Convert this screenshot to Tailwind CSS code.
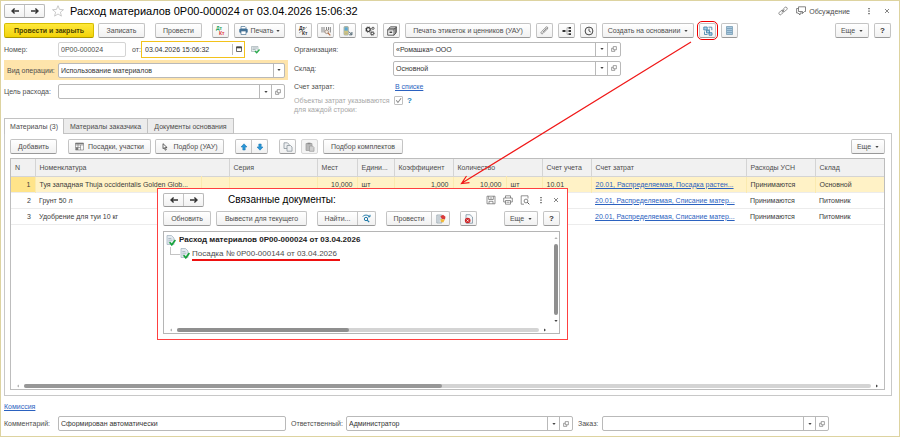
<!DOCTYPE html>
<html lang="ru">
<head>
<meta charset="utf-8">
<meta name="viewport" content="width=device-width, initial-scale=1">
<title>Расход материалов</title>
<script src="https://cdn.jsdelivr.net/npm/@tailwindcss/browser@4"></script>
</head>
<body class="bg-white font-['Liberation_Sans',Arial,sans-serif] text-[7px] leading-[9px] text-[#4d4d4d]">
<svg class="hidden" aria-hidden="true">
  <symbol id="left" viewBox="0 0 10 8"><path d="M9 4H2M4.600 1.400 2 4l2.600 2.600" fill="none" stroke="#333" stroke-width="1.400"/></symbol>
  <symbol id="right" viewBox="0 0 10 8"><path d="M1 4h7M5.400 1.400 8 4 5.400 6.600" fill="none" stroke="#333" stroke-width="1.400"/></symbol>
  <symbol id="caret" viewBox="0 0 4 4"><path d="M.4 1h3.200L2 3z" fill="#444"/></symbol>
  <symbol id="open" viewBox="0 0 8 8"><path d="M3 .8h4.200v4.200H3zM3 3H.8v4.200H5V5" fill="none" stroke="#666" stroke-width=".8"/></symbol>
  <symbol id="close" viewBox="0 0 6 6"><path d="m1 1 4 4M5 1 1 5" stroke="#666" stroke-width=".8"/></symbol>
  <symbol id="dots" viewBox="0 0 2 8"><path d="M.3 1h1.400v1.300H.3zM.3 3.500h1.400v1.300H.3zM.3 6h1.400v1.300H.3z" fill="#555"/></symbol>
  <symbol id="doc" viewBox="0 0 10 11"><path d="M1 .5h4.500l2.500 2.500v6.500H1z" fill="#e3eaef" stroke="#9fb0bd" stroke-width=".7"/><path d="M2.300 3.500h3M2.300 5.200h4M2.300 7h2" stroke="#8a9dac" stroke-width=".6"/><path d="m3.600 7.300 2.200 2.500L9.400 5" fill="none" stroke="#14a33a" stroke-width="1.700"/></symbol>
</svg>

<main class="relative flex min-h-screen flex-col border border-[#ddd3a0] px-1 pt-[3px] pb-[5px] pl-[3px]">
  <header class="flex h-[14px] items-center">
    <div class="flex h-[14px] w-[41px] divide-x divide-[#c4c4c4] rounded-[2px] border border-[#b9b9b9] border-b-[#999] bg-linear-to-b from-white to-[#f1f1f1]">
      <button class="flex flex-1 items-center justify-center" aria-label="Назад"><svg class="h-2 w-[10px]"><use href="#left"/></svg></button>
      <button class="flex flex-1 items-center justify-center" aria-label="Вперед"><svg class="h-2 w-[10px]"><use href="#right"/></svg></button>
    </div>
    <button class="ml-[7px]" aria-label="В избранное"><svg class="size-3" viewBox="0 0 12 12"><path d="m6 .7 1.500 3.700 4 .3-3.100 2.500 1 3.900L6 9 2.600 11.100l1-3.900L.5 4.700l4-.3z" fill="#fff" stroke="#b5b5b5" stroke-width=".7"/></svg></button>
    <h1 class="ml-[6px] text-[11px] leading-[14px] text-black">Расход материалов 0Р00-000024 от 03.04.2026 15:06:32</h1>
    <div class="ml-auto flex items-center pr-[5px]">
      <button aria-label="Ссылка"><svg class="size-[10px]" viewBox="0 0 10 10"><g fill="none" stroke="#777" stroke-width=".8"><rect x="4.500" y="1.900" width="5" height="2.800" rx="1.400" transform="rotate(-45 7 3.300)"/><rect x=".6" y="5.200" width="5" height="2.800" rx="1.400" transform="rotate(-45 3.100 6.600)"/><path d="m3.600 6.300 2.800-2.800"/></g></svg></button>
      <button class="ml-2 flex items-center gap-[3px]"><svg class="size-[10px]" viewBox="0 0 10 10"><path d="M2.500.8h7v4.700H8.500L6.500 7.500v-2h-4zM2.500 2.500H.6v4.500h1.400l2 2V7h2.500" fill="none" stroke="#666" stroke-width=".8"/></svg><span>Обсуждение</span></button>
      <button class="ml-[18px]" aria-label="Меню"><svg class="h-2 w-[2px]"><use href="#dots"/></svg></button>
      <button class="ml-[14px]" aria-label="Закрыть"><svg class="size-[6px]"><use href="#close"/></svg></button>
    </div>
  </header>

  <div class="mt-[5px] flex h-[15px] items-stretch gap-[10px]">
    <div class="flex gap-1">
      <button class="w-[90px] rounded-[2px] border border-[#d5bd00] border-b-[#a99500] bg-linear-to-b from-[#ffe838] to-[#f2d300] font-bold text-[#4a4200]">Провести и закрыть</button>
      <button class="w-[47px] rounded-[2px] border border-[#c4c4c4] border-b-[#999] bg-linear-to-b from-white to-[#f1f1f1]">Записать</button>
    </div>
    <button class="w-[47px] rounded-[2px] border border-[#c4c4c4] border-b-[#999] bg-linear-to-b from-white to-[#f1f1f1]">Провести</button>
    <div class="flex gap-[5px]">
      <button class="flex w-[17px] items-center justify-center rounded-[2px] border border-[#c4c4c4] border-b-[#999] bg-linear-to-b from-white to-[#f1f1f1]" aria-label="Движения документа"><svg class="h-[11px] w-3 font-bold" viewBox="0 0 12 11"><text x="1" y="5" font-size="5" fill="#1ea45b">Дт</text><text x="4" y="10" font-size="5" fill="#e23b3b">Кт</text></svg></button>
      <button class="flex w-[51px] items-center justify-center gap-[3px] rounded-[2px] border border-[#c4c4c4] border-b-[#999] bg-linear-to-b from-white to-[#f1f1f1]"><svg class="size-[9px]" viewBox="0 0 9 9"><path d="M2 .5h4l1 1V3H2z" fill="#fff" stroke="#4a7394" stroke-width=".7"/><rect x=".3" y="2.800" width="8.400" height="4" rx="1" fill="#3f6f96"/><path d="M2 5h5v3.500H2z" fill="#fff" stroke="#4a7394" stroke-width=".7"/></svg><span>Печать</span><svg class="size-[4px]"><use href="#caret"/></svg></button>
    </div>
    <div class="flex gap-[5px]">
      <button class="flex w-[17px] items-center justify-center rounded-[2px] border border-[#c4c4c4] border-b-[#999] bg-linear-to-b from-white to-[#f1f1f1]" aria-label="Проводки"><svg class="h-[11px] w-3 font-bold" viewBox="0 0 12 11"><text x="1" y="5" font-size="5" fill="#333">Дт</text><text x="4" y="10" font-size="5" fill="#333">Кт</text><path d="m1 8 8-6" stroke="#555" stroke-width=".5"/></svg></button>
      <button class="flex w-[17px] items-center justify-center rounded-[2px] border border-[#c4c4c4] border-b-[#999] bg-linear-to-b from-white to-[#f1f1f1]" aria-label="Штрихкод"><svg class="size-[10px]" viewBox="0 0 10 10"><path d="M1 1v5.500M3 1v5.500M5.500 1v3M7.500 1v3M9.300 1v5.500" stroke="#777" stroke-width=".9"/><circle cx="5.700" cy="5.800" r="1.800" fill="#f3e6dc" stroke="#8a7768" stroke-width=".7"/><path d="m7 7 2.300 2.300" stroke="#b96d43" stroke-width="1.100"/></svg></button>
      <button class="flex w-[17px] items-center justify-center rounded-[2px] border border-[#c4c4c4] border-b-[#999] bg-linear-to-b from-white to-[#f1f1f1]" aria-label="Терминал"><svg class="size-[10px]" viewBox="0 0 10 10"><rect x="1" y=".5" width="4.300" height="8.500" rx=".8" fill="#e7d77c" stroke="#8a9aa2" stroke-width=".7"/><path d="M1.500 1.200h3.300v3.500H1.500z" fill="#5aa6d6"/><path d="M2 6h2.500M2 7.400h2.500" stroke="#999" stroke-width=".6"/><path d="M6 5.700 8.500 8.300M8.900 6v2.800H6.200" fill="none" stroke="#3a5261" stroke-width=".9"/></svg></button>
      <button class="flex w-[17px] items-center justify-center rounded-[2px] border border-[#c4c4c4] border-b-[#999] bg-linear-to-b from-white to-[#f1f1f1]" aria-label="Настройки"><svg class="size-[10px]" viewBox="0 0 10 10"><g fill="none" stroke="#333"><circle cx="3.300" cy="3.600" r="1.900" stroke-width="1.200"/><circle cx="3.300" cy="3.600" r="2.900" stroke-dasharray="1 1.300" stroke-width=".7"/><circle cx="7.300" cy="7.400" r="1.300"/><circle cx="7.300" cy="7.400" r="2.100" stroke-dasharray=".8 .8" stroke-width=".6"/><circle cx="8" cy="2.300" r="1.100" stroke-width=".8"/></g></svg></button>
      <button class="flex w-[17px] items-center justify-center rounded-[2px] border border-[#c4c4c4] border-b-[#999] bg-linear-to-b from-white to-[#f1f1f1]" aria-label="Архив"><svg class="size-[10px]" viewBox="0 0 10 10"><path d="M.7 3.800h6.300v5.400H.7zM2 2.300h6.300v5.400M3.400.8h6v5.500M.7 3.800 3.400.8M7 3.800 9.400.8M7 9.200l2.400-2.900" fill="none" stroke="#3c3c3c" stroke-width=".8"/><path d="M2.500 5.500h2.700v1.500H2.500z" fill="#444"/></svg></button>
      <button class="w-[126px] rounded-[2px] border border-[#c4c4c4] border-b-[#999] bg-linear-to-b from-white to-[#f1f1f1]">Печать этикеток и ценников (УАУ)</button>
      <button class="flex w-[17px] items-center justify-center rounded-[2px] border border-[#c4c4c4] border-b-[#999] bg-linear-to-b from-white to-[#f1f1f1]" aria-label="Файлы"><svg class="size-[9px]" viewBox="0 0 9 9"><path d="M2.700 6.300 6 3c.8-.8 0-1.600-.8-.9L1.500 5.700C.2 7 1.700 8.600 3 7.400l4.300-4.300C8.700 1.600 7 0 5.600 1.300" fill="none" stroke="#777" stroke-width=".8"/></svg></button>
      <button class="flex w-[17px] items-center justify-center rounded-[2px] border border-[#c4c4c4] border-b-[#999] bg-linear-to-b from-white to-[#f1f1f1]" aria-label="Структура"><svg class="size-[10px]" viewBox="0 0 10 10"><path d="M.5 4h3v2h-3zM6.500.9h2.500v1.800H6.500zM6.500 4.100h2.500v1.800H6.500zM6.500 7.300h2.500v1.800H6.500z" fill="#333"/><path d="M3.500 5h3M5 1.700v6.600h1.500M5 1.700h1.500" fill="none" stroke="#888" stroke-width=".6"/></svg></button>
      <button class="flex w-[17px] items-center justify-center rounded-[2px] border border-[#c4c4c4] border-b-[#999] bg-linear-to-b from-white to-[#f1f1f1]" aria-label="История"><svg class="size-[10px]" viewBox="0 0 10 10"><circle cx="5" cy="5" r="3.900" fill="none" stroke="#444"/><path d="M5 2.500V5l1.800 1" fill="none" stroke="#444" stroke-width=".9"/></svg></button>
      <button class="flex w-[92px] items-center justify-center gap-1 rounded-[2px] border border-[#c4c4c4] border-b-[#999] bg-linear-to-b from-white to-[#f1f1f1]"><span>Создать на основании</span><svg class="size-[4px]"><use href="#caret"/></svg></button>
      <button class="relative flex w-[17px] items-center justify-center rounded-[2px] border border-[#c4c4c4] border-b-[#999] bg-linear-to-b from-white to-[#f1f1f1]" aria-label="Связанные документы"><svg class="size-[10px]" viewBox="0 0 10 10"><path d="M.8 1h3.400v3H.8zM3.500 4.300h3v2.600h-3zM6 6.700h3v2.500H6z" fill="#a9d0e8" stroke="#3a7ca5" stroke-width=".8"/><path d="M5.500 1.200h3.300v3M7 2.800l-1.500 1M1.500 5.500v3h3" fill="none" stroke="#3a7ca5" stroke-width=".8"/></svg><span class="absolute -inset-[3px] rounded-[5px] border border-[#f00000]"></span></button>
      <button class="flex w-[17px] items-center justify-center rounded-[2px] border border-[#c4c4c4] border-b-[#999] bg-linear-to-b from-white to-[#f1f1f1]" aria-label="Список"><svg class="size-[9px]" viewBox="0 0 9 9"><path d="M1.500.5h6v8h-6z" fill="#a8c7dc" stroke="#6c93ae" stroke-width=".7"/><path d="M2 2.500h5M2 4.500h5M2 6.500h5" stroke="#6f97b3" stroke-width=".7"/></svg></button>
    </div>
    <div class="ml-auto flex gap-[5px] pr-1">
      <button class="flex w-[34px] items-center justify-center gap-1 rounded-[2px] border border-[#c4c4c4] border-b-[#999] bg-linear-to-b from-white to-[#f1f1f1]"><span>Еще</span><svg class="size-[4px]"><use href="#caret"/></svg></button>
      <button class="w-[17px] rounded-[2px] border border-[#c4c4c4] border-b-[#999] bg-linear-to-b from-white to-[#f1f1f1] text-[8px] font-bold text-[#333]">?</button>
    </div>
  </div>

  <form class="mt-[3px] flex items-start gap-[6px]">
    <div class="w-[284px]">
      <div class="flex h-4 items-center">
        <label for="num" class="w-[54px]">Номер:</label>
        <input id="num" value="0Р00-000024" class="h-[15px] w-[68px] rounded-[2px] border border-[#d4d4d4] px-[2px]">
        <label for="date" class="w-[15px] pl-[6px]">от:</label>
        <div class="flex h-[17px] w-[104px] items-stretch border border-[#f2c21c]">
          <input id="date" value="03.04.2026 15:06:32" class="min-w-0 flex-1 pl-[3px] text-[#333] outline-none">
          <button type="button" class="my-[2px] flex w-3 items-center justify-center border-l border-[#bbb]" aria-label="Календарь"><svg class="size-[6px]" viewBox="0 0 6 6"><path d="M.5 1h5v4.500h-5z" fill="#fff" stroke="#444" stroke-width=".8"/><path d="M.3.5h5.400v1.800H.3z" fill="#444"/></svg></button>
        </div>
        <svg class="ml-[6px] size-[9px]" viewBox="0 0 9 9"><path d="M.5 1.500h6.500v5H.5z" fill="#e9eef0" stroke="#a5b0b5" stroke-width=".7"/><path d="M1.500 3h4.500M1.500 4.500h3" stroke="#93a0a6" stroke-width=".7"/><path d="m4 6 1.700 1.800L8.500 4.500" fill="none" stroke="#29ad4b" stroke-width="1.300"/></svg>
      </div>
      <div class="mt-[3px] flex h-[20px] items-center bg-[#fee4ab]">
        <label for="op" class="w-[54px] pl-[3px]">Вид операции:</label>
        <div class="relative flex h-[15px] w-[227px]">
          <select id="op" class="w-full appearance-none rounded-[2px] border border-[#b9b9b9] bg-white px-[2px] text-[#333]"><option>Использование материалов</option></select>
          <span class="pointer-events-none absolute inset-y-px right-px flex w-[11px] items-center justify-center border-l border-[#b9b9b9]"><svg class="size-[4px]"><use href="#caret"/></svg></span>
        </div>
      </div>
      <div class="mt-1 flex h-[15px] items-center">
        <label for="goal" class="w-[54px]">Цель расхода:</label>
        <div class="flex h-[15px] w-[227px] divide-x divide-[#b9b9b9] rounded-[2px] border border-[#b9b9b9]">
          <input id="goal" class="min-w-0 flex-1 px-[2px]">
          <button type="button" class="flex w-3 items-center justify-center" aria-label="Выбрать"><svg class="size-[4px]"><use href="#caret"/></svg></button>
          <button type="button" class="flex w-3 items-center justify-center" aria-label="Открыть"><svg class="size-[6px]"><use href="#open"/></svg></button>
        </div>
      </div>
    </div>
    <div class="w-[327px]">
      <div class="flex h-4 items-center">
        <label for="org" class="w-[99px]">Организация:</label>
        <div class="flex h-[15px] flex-1 divide-x divide-[#b9b9b9] rounded-[2px] border border-[#b9b9b9]">
          <input id="org" value="«Ромашка» ООО" class="min-w-0 flex-1 px-[2px] text-[#333]">
          <button type="button" class="flex w-3 items-center justify-center" aria-label="Выбрать"><svg class="size-[4px]"><use href="#caret"/></svg></button>
          <button type="button" class="flex w-3 items-center justify-center" aria-label="Открыть"><svg class="size-[6px]"><use href="#open"/></svg></button>
        </div>
      </div>
      <div class="mt-[3px] flex h-4 items-center">
        <label for="store" class="w-[99px]">Склад:</label>
        <div class="flex h-[15px] flex-1 divide-x divide-[#b9b9b9] rounded-[2px] border border-[#b9b9b9]">
          <input id="store" value="Основной" class="min-w-0 flex-1 px-[2px] text-[#333]">
          <button type="button" class="flex w-3 items-center justify-center" aria-label="Выбрать"><svg class="size-[4px]"><use href="#caret"/></svg></button>
          <button type="button" class="flex w-3 items-center justify-center" aria-label="Открыть"><svg class="size-[6px]"><use href="#open"/></svg></button>
        </div>
      </div>
      <div class="mt-[5px] flex h-[10px] items-center">
        <span class="w-[101px]">Счет затрат:</span>
        <a href="#" class="text-[#2b62c0] underline">В списке</a>
      </div>
      <div class="mt-[5px] flex items-start text-[#a8a8a8]">
        <label for="obj" class="w-[100px]">Объекты затрат указываются<br>для каждой строки:</label>
        <span class="relative flex size-[9px]">
          <input id="obj" type="checkbox" checked disabled class="size-[9px] appearance-none rounded-[1px] border border-[#c0c0c0] bg-white">
          <svg class="pointer-events-none absolute inset-0 size-[9px]" viewBox="0 0 8 8"><path d="m2 3.800 1.500 2L6.300 2" fill="none" stroke="#888" stroke-width=".9"/></svg>
        </span>
        <button type="button" class="ml-1 text-[8px] leading-[9px] font-bold text-[#1d83b8]">?</button>
      </div>
    </div>
  </form>

  <div role="tablist" class="relative z-10 mt-1 -mb-px flex h-4">
    <button role="tab" aria-selected="true" class="w-[60px] border border-b-0 border-[#c2c2c2] bg-white">Материалы (3)</button>
    <button role="tab" class="w-[84px] border border-l-0 border-[#c2c2c2] bg-[#ececec]">Материалы заказчика</button>
    <button role="tab" class="w-[86px] border border-l-0 border-[#c2c2c2] bg-[#ececec]">Документы основания</button>
  </div>
  <section class="mr-[3px] flex flex-1 flex-col border border-[#c8c8c8] px-[5px] pt-[5px] pb-[5px]">
    <div class="flex h-[15px] items-stretch gap-[11px]">
      <button class="w-[47px] rounded-[2px] border border-[#c4c4c4] border-b-[#999] bg-linear-to-b from-white to-[#f1f1f1]">Добавить</button>
      <div class="flex gap-1">
        <button class="flex w-[83px] items-center justify-center gap-1 rounded-[2px] border border-[#c4c4c4] border-b-[#999] bg-linear-to-b from-white to-[#f1f1f1]"><svg class="size-[9px]" viewBox="0 0 9 9"><path d="M.5 1h8v7h-8zM.5 3h8M3 1v7M5.500 3v5M.5 5.500h5" fill="none" stroke="#777" stroke-width=".6"/><path d="M.5 1h8v1.200h-8zM1 5.500h2V8H1z" fill="#777"/></svg><span>Посадки, участки</span></button>
        <button class="flex w-[69px] items-center justify-center gap-1 rounded-[2px] border border-[#c4c4c4] border-b-[#999] bg-linear-to-b from-white to-[#f1f1f1]"><svg class="size-2" viewBox="0 0 8 8"><path d="M2 .7v5l1.300-1 1 2.500 1-.5-1-2.200h1.800z" fill="#fff" stroke="#444" stroke-width=".8"/></svg><span>Подбор (УАУ)</span></button>
      </div>
      <div class="flex w-[33px] divide-x divide-[#c4c4c4] rounded-[2px] border border-[#c4c4c4] border-b-[#999] bg-linear-to-b from-white to-[#f1f1f1]">
        <button class="flex flex-1 items-center justify-center" aria-label="Вверх"><svg class="size-2" viewBox="0 0 8 8"><path d="m4 .8 3 3.200H5.200v3H2.800V4H1z" fill="#2796d8" stroke="#1873ad" stroke-width=".5"/></svg></button>
        <button class="flex flex-1 items-center justify-center" aria-label="Вниз"><svg class="size-2" viewBox="0 0 8 8"><path d="M4 7.200 1 4h1.800V1h2.400v3H7z" fill="#2796d8" stroke="#1873ad" stroke-width=".5"/></svg></button>
      </div>
      <div class="flex gap-[5px]">
        <button class="flex w-[17px] items-center justify-center rounded-[2px] border border-[#c4c4c4] border-b-[#999] bg-linear-to-b from-white to-[#f1f1f1]" aria-label="Копировать"><svg class="size-[10px]" viewBox="0 0 10 10"><path d="M1 .8h3.500L6 2.300v4.200H1z" fill="#eef0f2" stroke="#8b969d" stroke-width=".8"/><path d="M4 3.500h3.500L9 5v4.200H4z" fill="#eef0f2" stroke="#8b969d" stroke-width=".8"/></svg></button>
        <button class="flex w-[17px] items-center justify-center rounded-[2px] border border-[#d6d6d6] bg-[#f4f4f4]" aria-label="Вставить"><svg class="size-[10px]" viewBox="0 0 10 10"><path d="M1 1.500h6v7H1z" fill="#b9b9b9" stroke="#999" stroke-width=".7"/><path d="M2.500.7h3v1.500h-3z" fill="#888"/><path d="M4.500 4h3L9 5.500v3.800H4.500z" fill="#d0d0d0" stroke="#999" stroke-width=".7"/></svg></button>
        <button class="w-[80px] rounded-[2px] border border-[#c4c4c4] border-b-[#999] bg-linear-to-b from-white to-[#f1f1f1]">Подбор комплектов</button>
      </div>
      <button class="mr-px ml-auto flex w-[34px] items-center justify-center gap-1 rounded-[2px] border border-[#c4c4c4] border-b-[#999] bg-linear-to-b from-white to-[#f1f1f1]"><span>Еще</span><svg class="size-[4px]"><use href="#caret"/></svg></button>
    </div>

    <div class="mt-1 mr-px flex flex-1 flex-col border border-[#bdbdbd]">
      <table class="w-full table-fixed border-collapse text-left">
        <colgroup><col class="w-[24px]"><col class="w-[166px]"><col class="w-[28px]"><col class="w-[88px]"><col class="w-[40px]"><col class="w-[37px]"><col class="w-[59px]"><col class="w-[53px]"><col class="w-[36px]"><col class="w-[49px]"><col><col class="w-[69px]"><col class="w-[69px]"></colgroup>
        <thead>
          <tr class="h-[17px] divide-x divide-[#d4d4d4] border-b border-[#d4d4d4] bg-[#f1f1f1] *:px-1 *:font-normal *:whitespace-nowrap">
            <th>N</th><th colspan="2">Номенклатура</th><th>Серия</th><th>Мест</th><th>Едини...</th><th>Коэффициент</th><th colspan="2">Количество</th><th>Счет учета</th><th>Счет затрат</th><th>Расходы УСН</th><th>Склад</th>
          </tr>
        </thead>
        <tbody class="text-[#3c3c3c]">
          <tr class="h-4 divide-x divide-[#faeab0] border-b border-[#ececec] bg-[#fff2c6] *:px-1 *:whitespace-nowrap">
            <td class="bg-[#ffe48a] text-right">1</td><td>Туя западная Thuja occidentalis Golden Glob...</td><td></td><td></td><td class="text-right">10,000</td><td>шт</td><td class="text-right">1,000</td><td class="text-right">10,000</td><td>шт</td><td>10.01</td><td><a href="#" class="text-[#2b62c0] underline">20.01, Распределяемая, Посадка растен...</a></td><td>Принимаются</td><td>Основной</td>
          </tr>
          <tr class="h-4 border-b border-[#ececec] *:px-1 *:whitespace-nowrap">
            <td class="text-right">2</td><td>Грунт 50 л</td><td></td><td></td><td></td><td></td><td></td><td></td><td></td><td></td><td><a href="#" class="text-[#2b62c0] underline">20.01, Распределяемая, Списание матер...</a></td><td>Принимаются</td><td>Питомник</td>
          </tr>
          <tr class="h-4 border-b border-[#ececec] *:px-1 *:whitespace-nowrap">
            <td class="text-right">3</td><td>Удобрение для туи 10 кг</td><td></td><td></td><td></td><td></td><td></td><td></td><td></td><td></td><td><a href="#" class="text-[#2b62c0] underline">20.01, Распределяемая, Списание матер...</a></td><td>Принимаются</td><td>Питомник</td>
          </tr>
        </tbody>
      </table>
      <div class="mt-auto mb-px flex h-[5px] items-center gap-1 px-[5px]">
        <svg class="size-[4px] rotate-90 opacity-40"><use href="#caret"/></svg>
        <div class="h-1 flex-1 rounded-full bg-[#d4d4d4]"><div class="h-1 rounded-full bg-[#979797]" style="width:49.300%"></div></div>
        <svg class="size-[4px] -rotate-90"><use href="#caret"/></svg>
      </div>
    </div>
  </section>

  <a href="#" class="mt-[6px] self-start text-[#2b62c0] underline">Комиссия</a>
  <div class="mt-[5px] flex h-[15px] items-center gap-[5px]">
    <div class="flex items-center">
      <label for="comment" class="w-[54px]">Комментарий:</label>
      <input id="comment" value="Сформирован автоматически" class="h-[15px] w-[228px] rounded-[2px] border border-[#b9b9b9] px-[2px] text-[#333]">
    </div>
    <div class="flex items-center">
      <label for="resp" class="w-[55px]">Ответственный:</label>
      <div class="flex h-[15px] w-[227px] divide-x divide-[#b9b9b9] rounded-[2px] border border-[#b9b9b9]">
        <input id="resp" value="Администратор" class="min-w-0 flex-1 px-[2px] text-[#333]">
        <button class="flex w-3 items-center justify-center" aria-label="Выбрать"><svg class="size-[4px]"><use href="#caret"/></svg></button>
        <button class="flex w-3 items-center justify-center" aria-label="Открыть"><svg class="size-[6px]"><use href="#open"/></svg></button>
      </div>
    </div>
    <div class="flex items-center">
      <label for="order" class="w-[24px]">Заказ:</label>
      <div class="flex h-[15px] w-[227px] divide-x divide-[#b9b9b9] rounded-[2px] border border-[#b9b9b9]">
        <input id="order" class="min-w-0 flex-1 px-[2px]">
        <button class="flex w-3 items-center justify-center" aria-label="Выбрать"><svg class="size-[4px]"><use href="#caret"/></svg></button>
        <button class="flex w-3 items-center justify-center" aria-label="Открыть"><svg class="size-[6px]"><use href="#open"/></svg></button>
      </div>
    </div>
  </div>

  <div role="dialog" aria-labelledby="dlg" class="absolute top-[187px] left-[156px] z-20 flex h-[152px] w-[411px] flex-col border border-[#ff4040] bg-white px-[5px] pt-1 pb-[5px]">
    <div class="flex h-[14px] items-center">
      <div class="flex h-[14px] w-[41px] divide-x divide-[#c4c4c4] rounded-[2px] border border-[#b9b9b9] border-b-[#999] bg-linear-to-b from-white to-[#f1f1f1]">
        <button class="flex flex-1 items-center justify-center" aria-label="Назад"><svg class="h-2 w-[10px]"><use href="#left"/></svg></button>
        <button class="flex flex-1 items-center justify-center" aria-label="Вперед"><svg class="h-2 w-[10px]"><use href="#right"/></svg></button>
      </div>
      <h2 id="dlg" class="ml-[24px] text-[10px] leading-[14px] text-black">Связанные документы:</h2>
      <div class="ml-auto flex items-center gap-[7px]">
        <button aria-label="Сохранить"><svg class="size-[10px]" viewBox="0 0 10 10"><path d="M1 1.200h8v7.600H1zM2.700 1.200v3.300h4.600V1.200M3 8.800V6.300h4v2.500M4 3h2" fill="none" stroke="#666" stroke-width=".7"/></svg></button>
        <button aria-label="Печать"><svg class="size-[10px]" viewBox="0 0 10 10"><path d="M2.500 3V.8h5V3M2.500 7H.7V3h8.600v4H7.500M2.500 5.500h5v3.700h-5zM3.500 7.200h3" fill="none" stroke="#666" stroke-width=".7"/></svg></button>
        <button aria-label="Просмотр"><svg class="size-[10px]" viewBox="0 0 10 10"><path d="M8 3.500V.8H1.200v8.400H4" fill="none" stroke="#666" stroke-width=".7"/><circle cx="6" cy="6" r="1.900" fill="none" stroke="#555" stroke-width=".7"/><path d="m7.300 7.300 2 2" stroke="#555"/></svg></button>
        <button class="mr-1 ml-[3px]" aria-label="Меню"><svg class="h-2 w-[2px]"><use href="#dots"/></svg></button>
        <button class="mr-[3px]" aria-label="Закрыть"><svg class="size-[6px]"><use href="#close"/></svg></button>
      </div>
    </div>
    <div class="mt-1 flex h-[15px] items-stretch gap-[10px]">
      <div class="flex gap-[5px]">
        <button class="w-[48px] rounded-[2px] border border-[#c4c4c4] border-b-[#999] bg-linear-to-b from-white to-[#f1f1f1]">Обновить</button>
        <button class="w-[91px] rounded-[2px] border border-[#c4c4c4] border-b-[#999] bg-linear-to-b from-white to-[#f1f1f1]">Вывести для текущего</button>
      </div>
      <div class="flex w-[59px] divide-x divide-[#c4c4c4] rounded-[2px] border border-[#c4c4c4] border-b-[#999] bg-linear-to-b from-white to-[#f1f1f1]">
        <button class="flex-1">Найти...</button>
        <button class="flex w-[17px] items-center justify-center" aria-label="Расширенный поиск"><svg class="size-[9px]" viewBox="0 0 9 9"><path d="M.8 2.500C2 .8 5.500.5 7.500 2.500M8 .8v2H6" fill="none" stroke="#1d78a8"/><circle cx="4" cy="5" r="1.700" fill="none" stroke="#1d78a8"/><path d="m5.200 6.200 2 2" stroke="#1d78a8" stroke-width="1.200"/></svg></button>
      </div>
      <div class="flex w-[64px] divide-x divide-[#c4c4c4] rounded-[2px] border border-[#c4c4c4] border-b-[#999] bg-linear-to-b from-white to-[#f1f1f1]">
        <button class="flex-1">Провести</button>
        <button class="flex w-[17px] items-center justify-center" aria-label="Отменить проведение"><svg class="size-[10px]" viewBox="0 0 10 10"><path d="M.8 1h5v8h-5z" fill="#dfe6ea" stroke="#8d9ba5" stroke-width=".7"/><path d="M1.700 3h3M1.700 5h3M1.700 7h2" stroke="#8d9ba5" stroke-width=".6"/><path d="M4.300 2.500 7 .8l2.500 2L9 5.500 6.200 5z" fill="#d93a3a"/><path d="m4.500 5 4.300.6-1.500 3-2.500-.8z" fill="#f0b93a"/></svg></button>
      </div>
      <button class="flex w-[17px] items-center justify-center rounded-[2px] border border-[#c4c4c4] border-b-[#999] bg-linear-to-b from-white to-[#f1f1f1]" aria-label="Пометить на удаление"><svg class="size-[10px]" viewBox="0 0 10 10"><path d="M2 .7h4L8.500 3v6.200H2z" fill="#f3f6f8" stroke="#7f93a1" stroke-width=".8"/><circle cx="3.700" cy="6.500" r="2.800" fill="#cc2427"/><path d="m2.700 5.500 2 2M4.700 5.500l-2 2" stroke="#fff" stroke-width=".8"/></svg></button>
      <div class="ml-auto flex gap-[5px] pr-[2px]">
        <button class="flex w-[34px] items-center justify-center gap-1 rounded-[2px] border border-[#c4c4c4] border-b-[#999] bg-linear-to-b from-white to-[#f1f1f1]"><span>Еще</span><svg class="size-[4px]"><use href="#caret"/></svg></button>
        <button class="w-[17px] rounded-[2px] border border-[#c4c4c4] border-b-[#999] bg-linear-to-b from-white to-[#f1f1f1] text-[8px] font-bold text-[#333]">?</button>
      </div>
    </div>
    <div class="mt-[5px] mr-[2px] flex flex-1 flex-col border border-[#b5b5b5]">
      <div class="flex flex-1">
        <ul class="flex-1 pt-[2px] pl-[2px] text-[8px] leading-[10px]">
          <li>
            <div class="flex h-3 items-center gap-[3px] font-bold text-[#222]"><svg class="h-[11px] w-[10px]"><use href="#doc"/></svg><span>Расход материалов 0Р00-000024 от 03.04.2026</span></div>
            <ul class="ml-1 pt-px">
              <li class="flex items-start"><span class="h-2 w-[10px] border-b border-l border-[#c4c4c4]"></span><svg class="mt-px h-[11px] w-[10px]"><use href="#doc"/></svg><span class="ml-[2px] border-b-2 border-[#ee1111] pt-[2px] pr-[3px]">Посадка № 0Р00-000144 от 03.04.2026</span></li>
            </ul>
          </li>
        </ul>
        <div class="flex w-[7px] flex-col items-center gap-1 pt-[4px] pb-1">
          <svg class="size-[4px] rotate-180 opacity-40"><use href="#caret"/></svg>
          <div class="w-1 flex-1 rounded-full bg-[#8f8f8f]"></div>
          <svg class="size-[4px]"><use href="#caret"/></svg>
        </div>
      </div>
      <div class="mb-px flex h-[5px] items-center gap-1 pr-[12px] pl-[5px]">
        <svg class="size-[4px] rotate-90 opacity-40"><use href="#caret"/></svg>
        <div class="h-1 flex-1 rounded-full bg-[#d4d4d4]"><div class="h-1 rounded-full bg-[#8f8f8f]" style="width:47.500%"></div></div>
        <svg class="size-[4px] -rotate-90"><use href="#caret"/></svg>
      </div>
    </div>
  </div>

  <svg class="pointer-events-none absolute top-[40px] left-[455px] z-30 h-[148px] w-[240px]" viewBox="0 0 240 148" aria-hidden="true"><path d="M235 1 6 142M10.500 135 5.500 142.500l8-.8" fill="none" stroke="#f01818" stroke-width="1.200"/></svg>
</main>
</body>
</html>
